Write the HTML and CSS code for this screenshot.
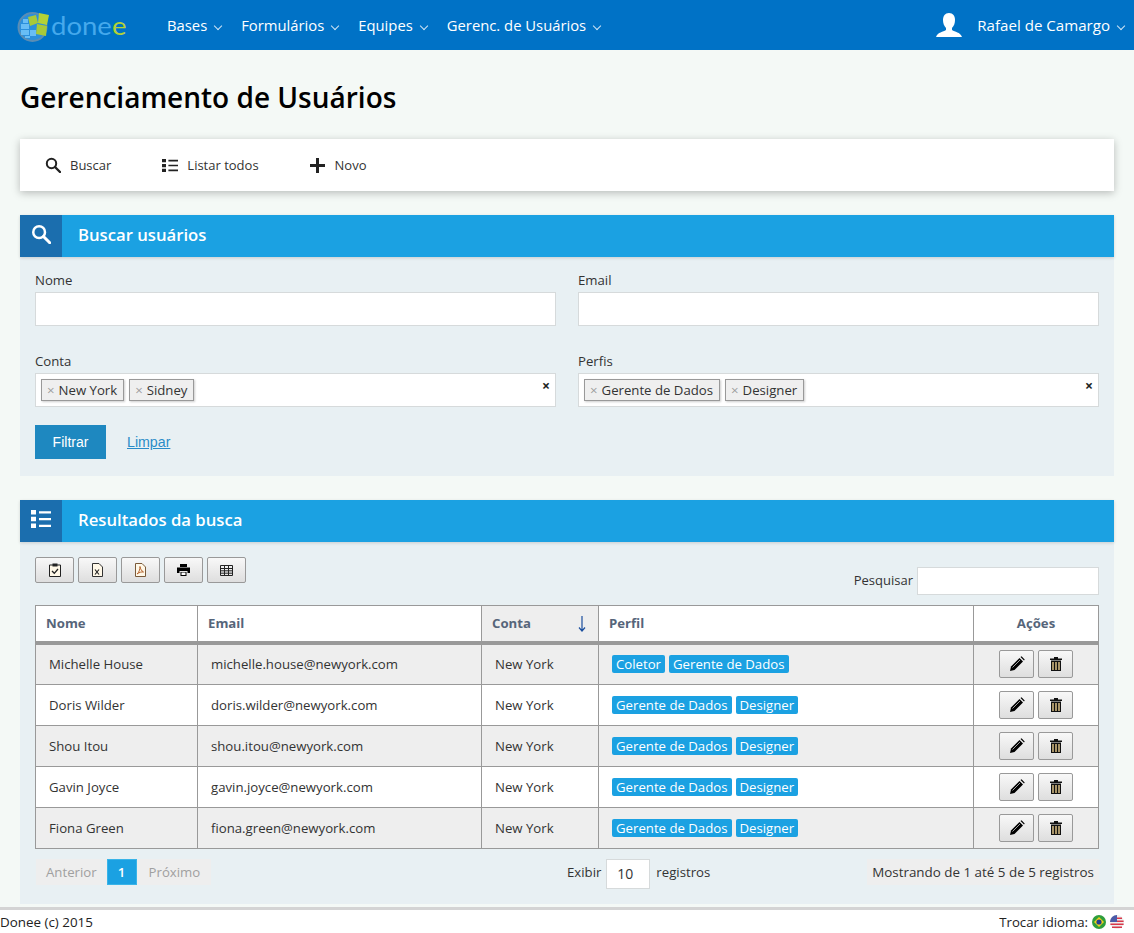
FILE: index.html
```html
<!DOCTYPE html>
<html lang="pt-BR">
  <head>
    <meta charset="UTF-8" />
    <title>Gerenciamento de Usuários</title>
    <link rel="stylesheet" href="styles.css">
  </head>
  <body>
    <svg class="sprites" width="0" height="0">
      <symbol id="i-search" viewBox="0 0 16 16"><circle cx="6.5" cy="6.5" r="4.7" fill="none" stroke="currentColor" stroke-width="2"/><path d="M10 10l5 5" stroke="currentColor" stroke-width="2.4" stroke-linecap="round"/></symbol>
      <symbol id="i-list" viewBox="0 0 20 16" preserveAspectRatio="none"><path d="M0 0h5v4H0zM0 6h5v4H0zM0 12h5v4H0zM8 1h12v2H8zM8 7h12v2H8zM8 13h12v2H8z" fill="currentColor"/></symbol>
      <symbol id="i-pencil" viewBox="0 0 16 16"><path d="M1 15l1-4.500L10.500 2 14 5.500 5.500 14z" fill="currentColor"/><path d="M11.500 1l1-.7 3.200 3.200-.7 1z" fill="currentColor"/><path d="M3.500 11.500l7.500-7.500" stroke="#e8e8e8" stroke-width=".7"/></symbol>
      <symbol id="i-trash" viewBox="0 0 12 14"><path d="M0 1.500h12V3H0zM4 0h4v1.500H4z" fill="#111"/><path d="M1 3.500h10V14H1z" fill="#111"/><path d="M2 5h2v8H2zM5 5h2v8H5zM8 5h2v8H8z" fill="#a89468"/></symbol>
    </svg>

    <header class="topbar">
      <a class="logo">
        <svg width="32" height="34" viewBox="0 0 32 34">
          <circle cx="15.500" cy="19" r="14" fill="#2b8fdc" stroke="#5a8db4" stroke-width="2"/>
          <path d="M4 16h8v5H4zM4 22h8v5H4zM13 22h6v6h-6zM8 28h5v2H8zM6 11h5v4H6z" fill="#68bdf5"/>
          <path d="M11 9l8-2 2 8-8 3z" fill="#a8c93a"/>
          <path d="M22 5l10 2-2 10-9-2z" fill="#b4d236"/>
          <path d="M20 16l10 2-1 10-10-2z" fill="#a8c93a"/>
        </svg>
        <span class="logo-text">don<span class="logo-mid">e</span><span class="logo-end">e</span></span>
      </a>
      <nav class="menu">
        <a>Bases<i class="caret"></i></a>
        <a>Formulários<i class="caret"></i></a>
        <a>Equipes<i class="caret"></i></a>
        <a>Gerenc. de Usuários<i class="caret"></i></a>
      </nav>
      <div class="user">
        <svg width="26" height="24" viewBox="0 0 26 24"><path d="M13 0c4 0 6 3 6 7 0 3-1 6-3 8v2c3 2 8 2 10 7H0c2-5 7-5 10-7v-2C8 13 7 10 7 7c0-4 2-7 6-7z" fill="#fff"/></svg>
        <span>Rafael de Camargo<i class="caret"></i></span>
      </div>
    </header>

    <main class="page">
      <h1>Gerenciamento de Usuários</h1>

      <div class="actions">
        <a><svg width="16" height="16"><use href="#i-search"/></svg>Buscar</a>
        <a><svg width="16" height="13"><use href="#i-list"/></svg>Listar todos</a>
        <a><svg width="15" height="15" viewBox="0 0 15 15"><path d="M6 0h3v6h6v3H9v6H6V9H0V6h6z" fill="currentColor"/></svg>Novo</a>
      </div>

      <section class="panel search-panel">
        <div class="panel-head">
          <span class="panel-icon"><svg width="20" height="20"><use href="#i-search"/></svg></span>
          <h2>Buscar usuários</h2>
        </div>
        <div class="panel-body">
          <div class="fields">
            <div class="field">
              <label>Nome</label>
              <input type="text" />
            </div>
            <div class="field">
              <label>Email</label>
              <input type="text" />
            </div>
            <div class="field">
              <label>Conta</label>
              <div class="multi">
                <span class="chip"><b>×</b>New York</span>
                <span class="chip"><b>×</b>Sidney</span>
                <span class="clear">×</span>
              </div>
            </div>
            <div class="field">
              <label>Perfis</label>
              <div class="multi">
                <span class="chip"><b>×</b>Gerente de Dados</span>
                <span class="chip"><b>×</b>Designer</span>
                <span class="clear">×</span>
              </div>
            </div>
          </div>
          <div class="form-actions">
            <button type="button" class="btn-filter">Filtrar</button>
            <a class="link-clear">Limpar</a>
          </div>
        </div>
      </section>

      <section class="panel results-panel">
        <div class="panel-head">
          <span class="panel-icon"><svg width="20" height="18"><use href="#i-list"/></svg></span>
          <h2>Resultados da busca</h2>
        </div>
        <div class="panel-body">
          <div class="table-tools">
            <div class="export">
              <button type="button"><svg width="12" height="14" viewBox="0 0 12 14"><path d="M.5 2h11v11.500H.5z" fill="#fff8e8" stroke="#222"/><path d="M3.500 .5h5v3h-5z" fill="#222"/><path d="M3 8l2.300 2.300L9 6" fill="none" stroke="#222" stroke-width="1.300"/></svg></button>
              <button type="button"><svg width="11" height="14" viewBox="0 0 11 14"><path d="M.5.500h6.500l3.500 3.500v9.500H.5z" fill="#fff8e8" stroke="#333"/><path d="M3 6.500l4 5M7 6.500l-4 5" stroke="#222" stroke-width="1.200"/></svg></button>
              <button type="button"><svg width="11" height="14" viewBox="0 0 11 14"><path d="M.5.500h6.500l3.500 3.500v9.500H.5z" fill="#fff8e8" stroke="#7a5a3a"/><path d="M5 3.500c0 3-1 6-3 7.500 2.500-1.800 4.500-2.300 6.500-2C6.500 8 5.500 6 5 3.500z" fill="none" stroke="#b5612a"/></svg></button>
              <button type="button"><svg width="13" height="12" viewBox="0 0 13 12"><path d="M3 0h7v3H3zM0 3.500h13V9h-2.500V7h-8v2H0zM3.500 8h6v4h-6z" fill="#000"/><path d="M4.500 8.500h4v2.500h-4z" fill="#fff"/></svg></button>
              <button type="button"><svg width="13" height="11" viewBox="0 0 13 11"><path d="M.5.500h12v10H.500zM.5 3.500h12M.5 5.800h12M.5 8.200h12M4.500.5v10M8.500.5v10" fill="none" stroke="#222"/></svg></button>
            </div>
            <div class="quick-search">
              <label>Pesquisar</label>
              <input type="text" />
            </div>
          </div>

          <table class="results">
            <colgroup>
              <col class="col-name" /><col class="col-email" /><col class="col-account" /><col class="col-profile" /><col class="col-actions" />
            </colgroup>
            <thead>
              <tr>
                <th>Nome</th>
                <th>Email</th>
                <th class="sorted">Conta<svg class="sort-arrow" width="8" height="16" viewBox="0 0 8 16"><path d="M4 0v15M1 11.500L4 15l3-3.500" fill="none" stroke="#1b4f9e" stroke-width="1.200"/></svg></th>
                <th>Perfil</th>
                <th class="center">Ações</th>
              </tr>
            </thead>
            <tbody>
              <tr>
                <td>Michelle House</td><td>michelle.house@newyork.com</td><td>New York</td>
                <td><span class="tag">Coletor</span><span class="tag">Gerente de Dados</span></td>
                <td class="row-actions"><button type="button"><svg width="16" height="16"><use href="#i-pencil"/></svg></button><button type="button"><svg width="12" height="14"><use href="#i-trash"/></svg></button></td>
              </tr>
              <tr>
                <td>Doris Wilder</td><td>doris.wilder@newyork.com</td><td>New York</td>
                <td><span class="tag">Gerente de Dados</span><span class="tag">Designer</span></td>
                <td class="row-actions"><button type="button"><svg width="16" height="16"><use href="#i-pencil"/></svg></button><button type="button"><svg width="12" height="14"><use href="#i-trash"/></svg></button></td>
              </tr>
              <tr>
                <td>Shou Itou</td><td>shou.itou@newyork.com</td><td>New York</td>
                <td><span class="tag">Gerente de Dados</span><span class="tag">Designer</span></td>
                <td class="row-actions"><button type="button"><svg width="16" height="16"><use href="#i-pencil"/></svg></button><button type="button"><svg width="12" height="14"><use href="#i-trash"/></svg></button></td>
              </tr>
              <tr>
                <td>Gavin Joyce</td><td>gavin.joyce@newyork.com</td><td>New York</td>
                <td><span class="tag">Gerente de Dados</span><span class="tag">Designer</span></td>
                <td class="row-actions"><button type="button"><svg width="16" height="16"><use href="#i-pencil"/></svg></button><button type="button"><svg width="12" height="14"><use href="#i-trash"/></svg></button></td>
              </tr>
              <tr>
                <td>Fiona Green</td><td>fiona.green@newyork.com</td><td>New York</td>
                <td><span class="tag">Gerente de Dados</span><span class="tag">Designer</span></td>
                <td class="row-actions"><button type="button"><svg width="16" height="16"><use href="#i-pencil"/></svg></button><button type="button"><svg width="12" height="14"><use href="#i-trash"/></svg></button></td>
              </tr>
            </tbody>
          </table>

          <div class="table-foot">
            <div class="pager">
              <a class="prev">Anterior</a><a class="current">1</a><a class="next">Próximo</a>
            </div>
            <div class="foot-right">
              <div class="page-size">
                <span>Exibir</span>
                <span class="size-box">10</span>
                <span class="size-label">registros</span>
              </div>
              <div class="info">Mostrando de 1 até 5 de 5 registros</div>
            </div>
          </div>
        </div>
      </section>
    </main>

    <footer class="footer">
      <span>Donee (c) 2015</span>
      <div class="lang">
        <span>Trocar idioma:</span>
        <svg width="14" height="14" viewBox="0 0 14 14"><circle cx="7" cy="7" r="7" fill="#2f9e3c"/><path d="M7 2l5 5-5 5-5-5z" fill="#f2d21c"/><circle cx="7" cy="7" r="2.600" fill="#233f8f"/></svg>
        <svg width="14" height="14" viewBox="0 0 14 14"><circle cx="7" cy="7" r="7" fill="#eee"/><path d="M2 2.500h10v1.500H2zM.4 5.500h13.200V7H.4zM.4 8.500h13.200V10H.4zM2 11.500h10V13H2z" fill="#d8384a"/><path d="M7 0a7 7 0 0 0-7 7h7z" fill="#4a5aa8"/></svg>
      </div>
    </footer>
  </body>
</html>
```

FILE: styles.css
```css
/* General */
* {
  box-sizing: border-box;
}

body {
  font-family: "Open Sans", Arial, sans-serif;
  font-size: 13.2px;
  color: #333;
  background-color: #f4f9f6;
  margin: 0;
}

.sprites {
  position: absolute;
}

/* Top bar */
.topbar {
  display: flex;
  align-items: center;
  height: 50px;
  background-color: #0072c6;
  color: #fff;
  padding: 0 10px 0 17px;
}

.logo {
  display: flex;
  align-items: center;
  width: 150px;
  gap: 2px;
}

.logo-text {
  font-family: Lato, sans-serif;
  font-weight: 400;
  font-size: 25px;
  line-height: 30px;
  color: #45a9ec;
  transform: scaleX(1.1);
  transform-origin: left center;
}

.logo-end {
  color: #b4d236;
}

.menu {
  display: flex;
  gap: 20px;
  font-size: 14.8px;
}

.caret {
  display: inline-block;
  width: 6px;
  height: 6px;
  margin-left: 8px;
  border-right: 1px solid #cfe4f5;
  border-bottom: 1px solid #cfe4f5;
  transform: rotate(45deg);
  position: relative;
  top: -2px;
}

.user {
  display: flex;
  align-items: center;
  gap: 15px;
  margin-left: auto;
  font-size: 15.1px;
}

/* Page */
.page {
  padding: 0 20px;
}

h1 {
  font-size: 28px;
  font-weight: 600;
  line-height: 38px;
  color: #000;
  margin: 0;
  padding: 28px 0 23px;
}

.actions {
  display: flex;
  align-items: center;
  height: 52px;
  padding-left: 25px;
  gap: 51px;
  background-color: #fff;
  box-shadow: 0 2px 8px rgba(0, 0, 0, 0.25);
  color: #333;
  font-size: 13px;
}

.actions a {
  display: flex;
  align-items: center;
  gap: 9px;
}

.actions a:last-child {
  gap: 10px;
}

.actions a svg {
  color: #222;
}

/* Panels */
.panel {
  background-color: #e8f0f3;
  margin-top: 24px;
}

.panel-head {
  display: flex;
  align-items: center;
  height: 42px;
  background-color: #1ba1e2;
  color: #fff;
  box-shadow: 0 1px 3px rgba(0, 0, 0, 0.15);
}

.panel-head h2 {
  font-size: 16.7px;
  font-weight: 600;
  margin: 0 0 4px;
}

.panel-icon {
  display: flex;
  align-items: center;
  justify-content: center;
  width: 42px;
  height: 42px;
  margin-right: 16px;
  padding-bottom: 4px;
  background-color: #1b6eae;
}

.panel-body {
  padding: 15px;
}

/* Search form */
.search-panel .panel-body {
  padding-bottom: 17px;
}

.fields {
  display: grid;
  grid-template-columns: 1fr 1fr;
  column-gap: 22px;
  row-gap: 27px;
}

.field label {
  display: block;
  line-height: 16px;
  padding-bottom: 4px;
  color: #333;
}

.field input,
.multi {
  display: flex;
  align-items: center;
  width: 100%;
  height: 34px;
  border: 1px solid #d6dadb;
  background-color: #fff;
}

.multi {
  position: relative;
  gap: 5px;
  padding-left: 5px;
}

.chip {
  display: flex;
  align-items: center;
  height: 22px;
  padding: 0 6px 0 5px;
  border: 1px solid #999;
  background-color: #efefef;
  box-shadow: 1px 1px 2px rgba(0, 0, 0, 0.2);
  color: #333;
}

.chip b {
  font-weight: 400;
  color: #999;
  margin-right: 4px;
}

.clear {
  position: absolute;
  right: 5px;
  top: 2px;
  font-size: 14px;
  font-weight: 700;
  color: #222;
}

.form-actions {
  display: flex;
  align-items: center;
  gap: 21px;
  margin-top: 18px;
}

.btn-filter {
  width: 71px;
  height: 34px;
  border: none;
  background-color: #1e88c0;
  color: #fff;
  font-family: "Liberation Sans", Arial, sans-serif;
  font-size: 14px;
}

.link-clear {
  font-family: "Liberation Sans", Arial, sans-serif;
  font-size: 14.200px;
  color: #2a8cc8;
  text-decoration: underline;
}

/* Results table */
.table-tools {
  display: flex;
  justify-content: space-between;
  align-items: flex-start;
  height: 48px;
}

.export {
  display: flex;
  gap: 4px;
}

.export button,
.row-actions button {
  display: inline-flex;
  align-items: center;
  justify-content: center;
  padding: 0;
  border: 1px solid #999;
  border-radius: 2px;
  background: linear-gradient(#f8f8f8, #dedede);
}

.export button {
  width: 39px;
  height: 26px;
}

.quick-search {
  display: flex;
  align-items: center;
  gap: 4px;
  margin-top: 10px;
}

.quick-search label {
  font-size: 13px;
  padding-bottom: 3px;
}

.quick-search input {
  width: 182px;
  height: 28px;
  border: 1px solid #d6dadb;
  background-color: #fff;
}

.results {
  width: 100%;
  border-collapse: collapse;
  table-layout: fixed;
  border: 1px solid #999;
}

.col-name { width: 162px; }
.col-email { width: 284px; }
.col-account { width: 117px; }
.col-profile { width: 375px; }

.results th {
  height: 37px;
  padding: 0 10px;
  background-color: #fff;
  border-right: 1px solid #999;
  border-bottom: 4px solid #999;
  color: #56657a;
  font-weight: 700;
  text-align: left;
}

.results th.sorted {
  position: relative;
  background-color: #eee;
}

.results th.center {
  text-align: center;
}

.sort-arrow {
  position: absolute;
  right: 12px;
  top: 10px;
}

.results td {
  height: 41px;
  padding: 0 13px;
  border-right: 1px solid #999;
  border-bottom: 1px solid #999;
  color: #333;
  background-color: #fff;
}

.results tbody tr:first-child td {
  height: 42px;
}

.results tbody tr:nth-child(odd) td {
  background-color: #eee;
}

.results .tag {
  display: inline-block;
  height: 18px;
  line-height: 18px;
  padding: 0 4px;
  margin-right: 4px;
  border-radius: 2px;
  background-color: #1ba1e2;
  color: #fff;
}

.results td.row-actions {
  text-align: center;
  padding: 0;
}

.row-actions button {
  width: 35px;
  height: 28px;
  margin: 0 2px;
  vertical-align: middle;
}

/* Table footer */
.table-foot {
  display: grid;
  grid-template-columns: 1fr 1fr;
  margin-top: 10px;
  height: 30px;
}

.pager {
  display: flex;
  align-items: stretch;
  height: 26px;
  width: max-content;
  color: #a0a0a0;
  background-color: #eee;
  margin-left: 1px;
}

.pager a {
  display: flex;
  align-items: center;
  padding: 0 10px;
}

.pager .next {
  padding: 0 11px 0 12px;
}

.pager .current {
  width: 30px;
  padding: 0;
  justify-content: center;
  background-color: #1ba1e2;
  border: 1px solid #39b4e8;
  color: #fff;
  font-weight: 600;
}

.foot-right {
  display: flex;
  justify-content: space-between;
  align-items: flex-start;
}

.page-size {
  display: flex;
  align-items: flex-start;
  gap: 5px;
  height: 30px;
  line-height: 26px;
}

.size-box {
  display: flex;
  align-items: center;
  width: 44px;
  height: 30px;
  padding-left: 10px;
  border: 1px solid #d6dadb;
  background-color: #fff;
  font-size: 14px;
}

.size-label {
  margin-left: 1px;
}

.info {
  display: flex;
  align-items: center;
  height: 26px;
  padding: 0 5px;
  background-color: #eee;
  font-size: 13.400px;
}

/* Footer */
.footer {
  display: flex;
  justify-content: space-between;
  align-items: center;
  height: 26px;
  margin-top: 3px;
  padding-right: 10px;
  border-top: 3px solid #d4d4d4;
  background-color: #fff;
  color: #222;
  font-size: 13.400px;
}

.lang {
  display: flex;
  align-items: center;
  gap: 4px;
  font-size: 13.200px;
}
```
